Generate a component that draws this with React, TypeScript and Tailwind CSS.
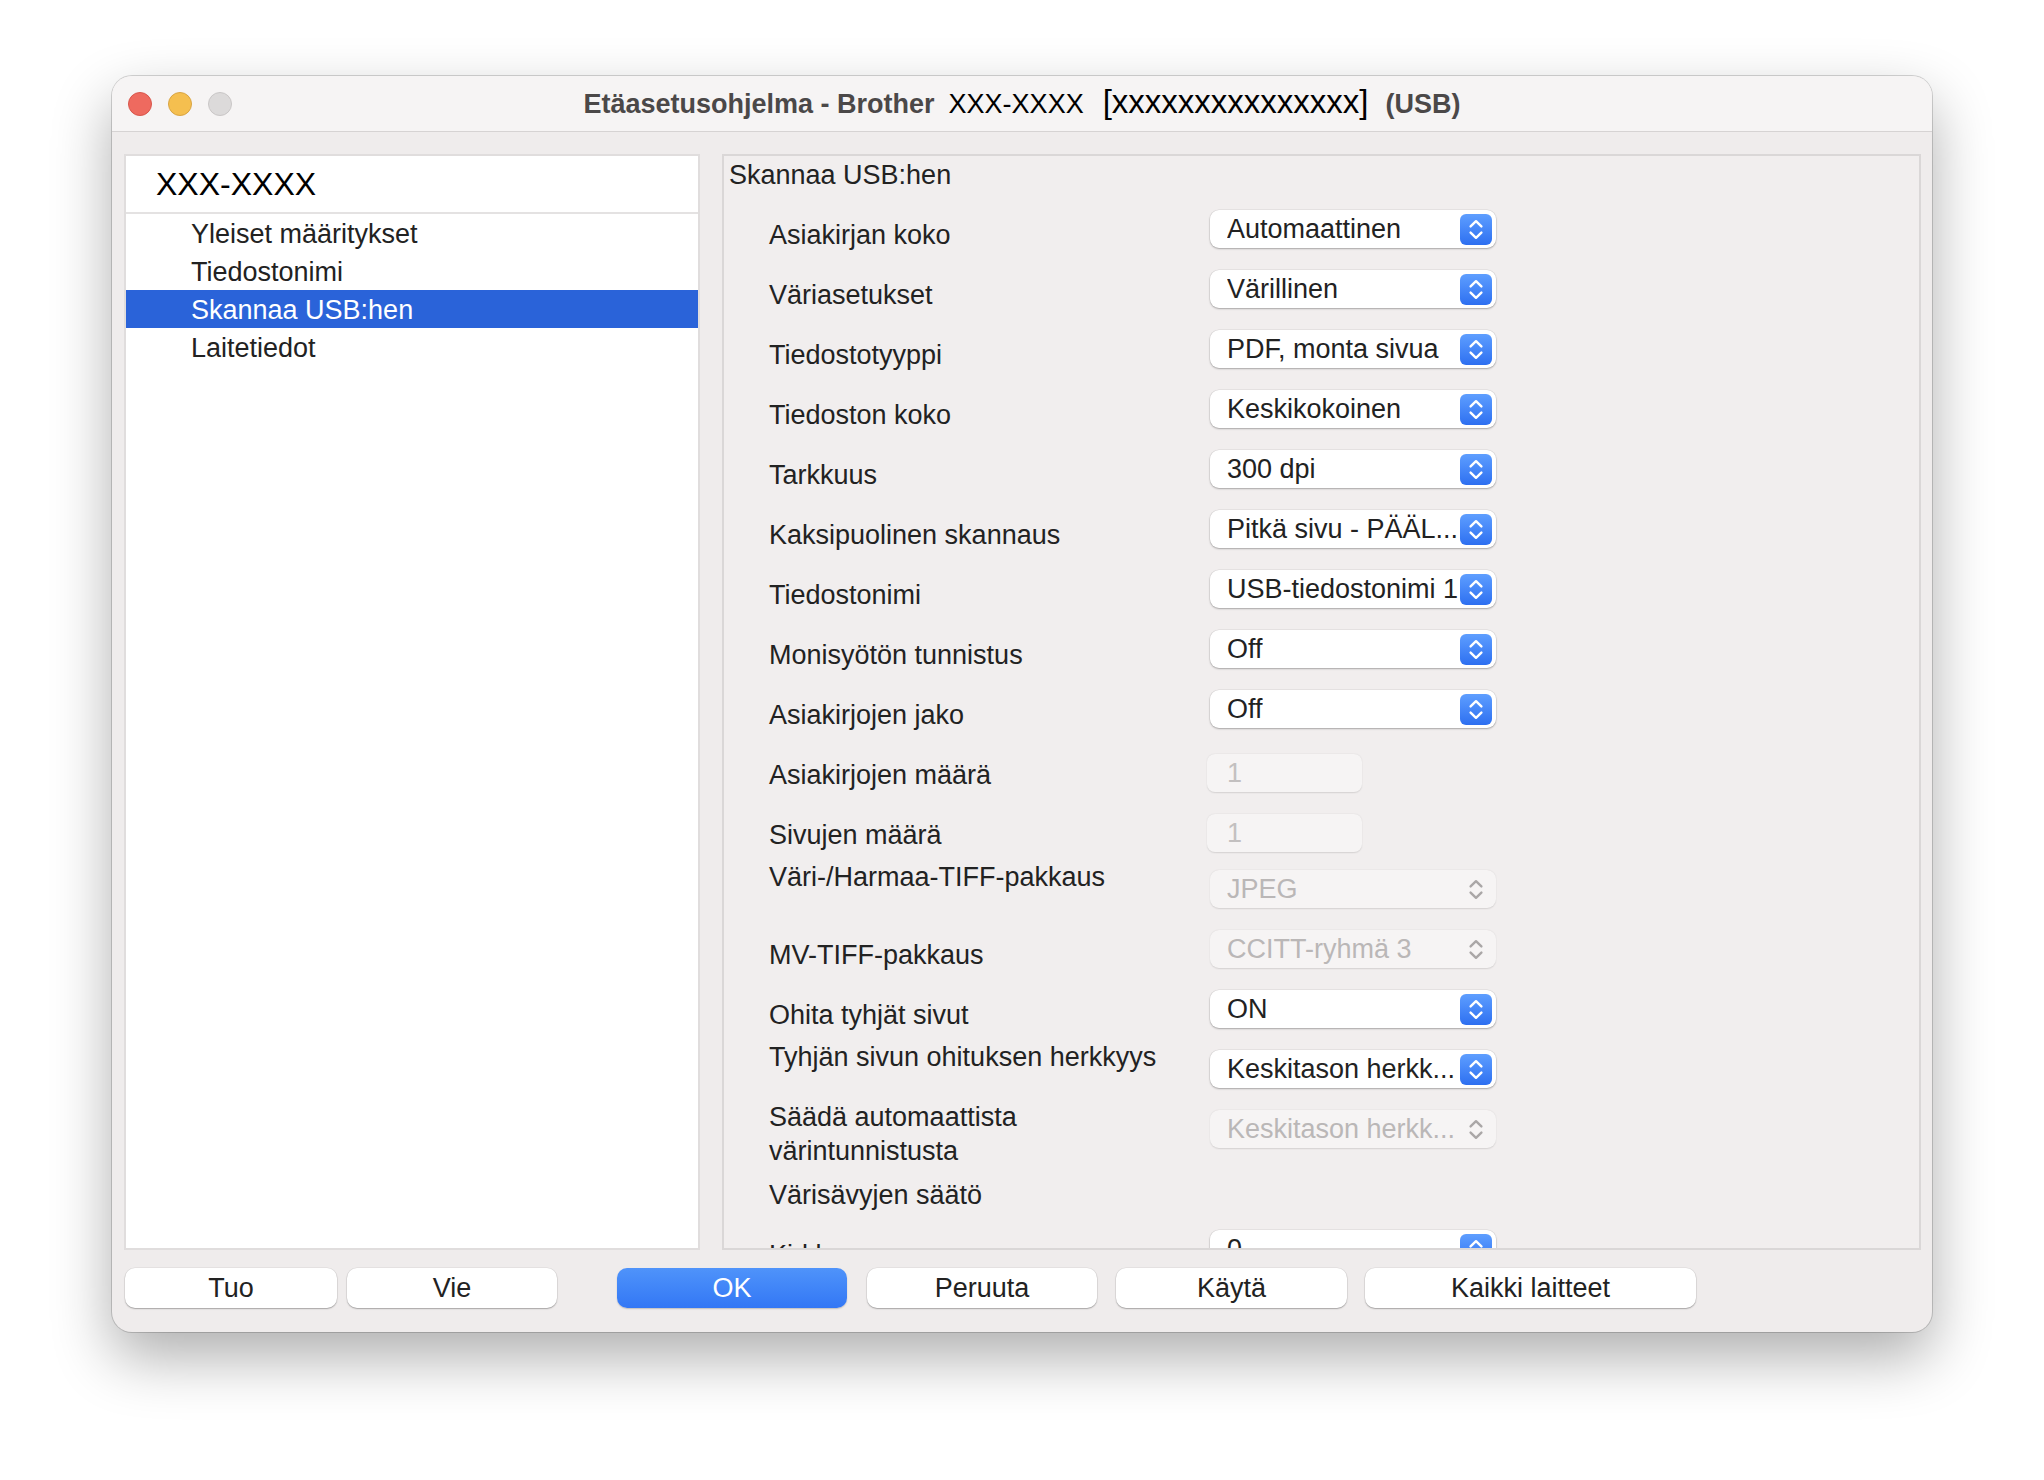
import React from 'react'
import clsx from 'clsx'

type Row = {
    label: React.ReactNode
    kind: 'popup' | 'number' | 'none'
    value?: string
    disabled?: boolean
    top?: boolean
}

const rows: Row[] = [
    { label: 'Asiakirjan koko', kind: 'popup', value: 'Automaattinen' },
    { label: 'Väriasetukset', kind: 'popup', value: 'Värillinen' },
    { label: 'Tiedostotyyppi', kind: 'popup', value: 'PDF, monta sivua' },
    { label: 'Tiedoston koko', kind: 'popup', value: 'Keskikokoinen' },
    { label: 'Tarkkuus', kind: 'popup', value: '300 dpi' },
    { label: 'Kaksipuolinen skannaus', kind: 'popup', value: 'Pitkä sivu - PÄÄL...' },
    { label: 'Tiedostonimi', kind: 'popup', value: 'USB-tiedostonimi 1' },
    { label: 'Monisyötön tunnistus', kind: 'popup', value: 'Off' },
    { label: 'Asiakirjojen jako', kind: 'popup', value: 'Off' },
    { label: 'Asiakirjojen määrä', kind: 'number', value: '1', disabled: true },
    { label: 'Sivujen määrä', kind: 'number', value: '1', disabled: true },
    { label: 'Väri-/Harmaa-TIFF-pakkaus', kind: 'popup', value: 'JPEG', disabled: true, top: true },
    { label: 'MV-TIFF-pakkaus', kind: 'popup', value: 'CCITT-ryhmä 3', disabled: true },
    { label: 'Ohita tyhjät sivut', kind: 'popup', value: 'ON' },
    { label: 'Tyhjän sivun ohituksen herkkyys', kind: 'popup', value: 'Keskitason herkk...', top: true },
    {
        label: (
            <>
                Säädä automaattista
                <br />
                värintunnistusta
            </>
        ),
        kind: 'popup',
        value: 'Keskitason herkk...',
        disabled: true,
        top: true,
    },
    { label: 'Värisävyjen säätö', kind: 'none' },
    // last row is cut by the scroll view, as in the app
    { label: 'Kirkkaus', kind: 'popup', value: '0' },
]

const sideItems = ['Yleiset määritykset', 'Tiedostonimi', 'Skannaa USB:hen', 'Laitetiedot']

function Chevrons({ color }: { color: string }) {
    return (
        <svg
            width="32"
            height="31"
            viewBox="0 0 32 31"
            fill="none"
            stroke={color}
            strokeWidth="2.4"
            strokeLinecap="round"
            strokeLinejoin="round"
        >
            <path d="M10.6 12.4 L16 7.2 L21.4 12.4" />
            <path d="M10.6 18.6 L16 23.8 L21.4 18.6" />
        </svg>
    )
}

function Popup({ value, disabled }: { value?: string; disabled?: boolean }) {
    return (
        <div
            className={clsx(
                'mt-[11px] flex h-[38px] w-[286px] shrink-0 items-center justify-between rounded-[9px] pl-[17px] pr-[4px]',
                disabled
                    ? 'bg-[#f6f4f4] text-[#bab7b7] shadow-[0_0.5px_1.5px_rgba(0,0,0,0.12)]'
                    : 'bg-white text-[#222] shadow-[0_1px_2px_rgba(0,0,0,0.28),0_0_0_0.5px_rgba(0,0,0,0.08)]',
            )}
        >
            <span className="overflow-hidden whitespace-nowrap leading-[38px]">{value}</span>
            {disabled ? (
                <div className="h-[31px] w-[32px] shrink-0">
                    <Chevrons color="#aaa7a7" />
                </div>
            ) : (
                <div className="h-[31px] w-[32px] shrink-0 rounded-[6px] bg-linear-to-b from-[#5e9eff] to-[#2e6ff0]">
                    <Chevrons color="#ffffff" />
                </div>
            )}
        </div>
    )
}

function Button({ children, width, primary }: { children: string; width: string; primary?: boolean }) {
    return (
        <div
            className={clsx(
                'flex h-[40px] items-center justify-center rounded-[10px]',
                width,
                primary
                    ? 'bg-linear-to-b from-[#4f93fa] to-[#3377f5] text-white shadow-[0_1px_1.5px_rgba(0,0,0,0.2)]'
                    : 'bg-white text-[#222] shadow-[0_1px_1.5px_rgba(0,0,0,0.28),0_0_0_0.5px_rgba(0,0,0,0.08)]',
            )}
        >
            {children}
        </div>
    )
}

export default function App() {
    return (
        <div className="h-[1480px] w-[2044px] bg-white pl-[112px] pt-[76px] font-['Liberation_Sans',Arial,sans-serif] text-[27px]">
            <div className="flex h-[1256px] w-[1820px] flex-col overflow-hidden rounded-[20px] bg-[#efecec] shadow-[0_25px_60px_rgba(0,0,0,0.32),0_0_0_1px_rgba(0,0,0,0.16)]">
                {/* title bar */}
                <div className="flex h-[56px] shrink-0 items-center border-b border-[#d6d3d3] bg-[#f6f4f4]">
                    <div className="flex w-[120px] shrink-0 gap-[16px] pl-[16px]">
                        <div className="h-[24px] w-[24px] rounded-full border border-[#d8564c] bg-[#ee6a5f]" />
                        <div className="h-[24px] w-[24px] rounded-full border border-[#d8a443] bg-[#f5bf4f]" />
                        <div className="h-[24px] w-[24px] rounded-full border border-[#c9c6c6] bg-[#dcdada]" />
                    </div>
                    <div className="flex flex-1 items-baseline justify-center whitespace-nowrap pb-[4px]">
                        <span className="font-bold text-[#4b4848]">Etäasetusohjelma - Brother</span>
                        <span className="ml-[14px] text-black">XXX-XXXX</span>
                        <span className="ml-[19px] text-[33px] text-black">[xxxxxxxxxxxxxxx]</span>
                        <span className="ml-[17px] font-bold text-[#4b4848]">(USB)</span>
                    </div>
                    <div className="w-[120px] shrink-0" />
                </div>

                {/* body */}
                <div className="flex gap-[22px] pl-[12px] pt-[22px]">
                    <div className="flex h-[1096px] w-[576px] shrink-0 flex-col border-2 border-[#e0dddd] bg-white">
                        <div className="flex h-[58px] items-center border-b-2 border-[#e4e2e2] pl-[30px] text-[32px] text-black">
                            XXX-XXXX
                        </div>
                        {sideItems.map(item => (
                            <div
                                key={item}
                                className={clsx(
                                    'flex h-[38px] items-center pl-[65px] pt-[3px]',
                                    item === 'Skannaa USB:hen' ? 'bg-[#2a63d9] text-white' : 'text-[#222]',
                                )}
                            >
                                {item}
                            </div>
                        ))}
                    </div>

                    <div className="h-[1096px] w-[1199px] shrink-0 overflow-hidden border-2 border-[#dad7d7] bg-[#f1eeee]">
                        <div className="h-[43px] pl-[5px] pt-[2px] leading-[34px] text-[#222]">Skannaa USB:hen</div>
                        {rows.map((row, i) => (
                            <div key={i} className="flex h-[60px] pl-[45px] text-[#222]">
                                <div
                                    className={clsx(
                                        'w-[441px] shrink-0 whitespace-nowrap leading-[34px]',
                                        row.top ? 'pt-[1px]' : 'pt-[19px]',
                                    )}
                                >
                                    {row.label}
                                </div>
                                {row.kind === 'popup' && <Popup value={row.value} disabled={row.disabled} />}
                                {row.kind === 'number' && (
                                    <div className="ml-[-3px] mt-[15px] flex h-[38px] w-[155px] items-center rounded-[8px] bg-[#f6f4f4] pl-[20px] text-[#c3c0c0] shadow-[0_0.5px_1.5px_rgba(0,0,0,0.12)]">
                                        {row.value}
                                    </div>
                                )}
                            </div>
                        ))}
                    </div>
                </div>

                {/* buttons */}
                <div className="mt-[18px] flex pl-[13px]">
                    <Button width="w-[212px]">Tuo</Button>
                    <div className="ml-[10px]">
                        <Button width="w-[210px]">Vie</Button>
                    </div>
                    <div className="ml-[60px]">
                        <Button width="w-[230px]" primary>
                            OK
                        </Button>
                    </div>
                    <div className="ml-[20px]">
                        <Button width="w-[230px]">Peruuta</Button>
                    </div>
                    <div className="ml-[19px]">
                        <Button width="w-[231px]">Käytä</Button>
                    </div>
                    <div className="ml-[18px]">
                        <Button width="w-[331px]">Kaikki laitteet</Button>
                    </div>
                </div>
            </div>
        </div>
    )
}
